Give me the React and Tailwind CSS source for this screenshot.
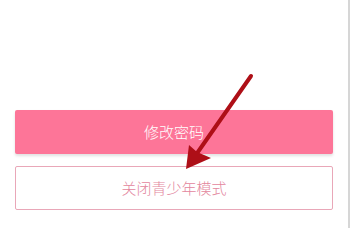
import React from 'react';

const Arrow = () => (
  <svg
    className="absolute left-0 top-0 pointer-events-none"
    width="350"
    height="228"
    viewBox="0 0 350 228"
  >
    <line x1="251" y1="76" x2="193" y2="159" stroke="#ae0f17" strokeWidth="4" strokeLinecap="round" />
    <polygon points="186,169 189,145 197,152 211,158" fill="#ae0f17" />
  </svg>
);

const App = () => {
  return (
    <div
      className="relative w-[350px] h-[228px] bg-white border-r-2 border-[#d6d6d6] overflow-hidden"
      style={{ fontFamily: '"Noto Sans CJK SC", "Noto Sans", sans-serif' }}
    >
      <div className="flex flex-col gap-[12px] pt-[110px] px-[15px]">
        <button className="h-[44px] w-full rounded-[2px] bg-[#fd7598] text-white text-[15px] font-light shadow-[0_2px_3px_rgba(0,0,0,0.12)]">
          修改密码
        </button>
        <button className="h-[44px] w-full rounded-[2px] bg-white border border-[#e9a7b8] text-[#e3869d] text-[15px] font-light">
          关闭青少年模式
        </button>
      </div>
      <Arrow />
    </div>
  );
};

export default App;
